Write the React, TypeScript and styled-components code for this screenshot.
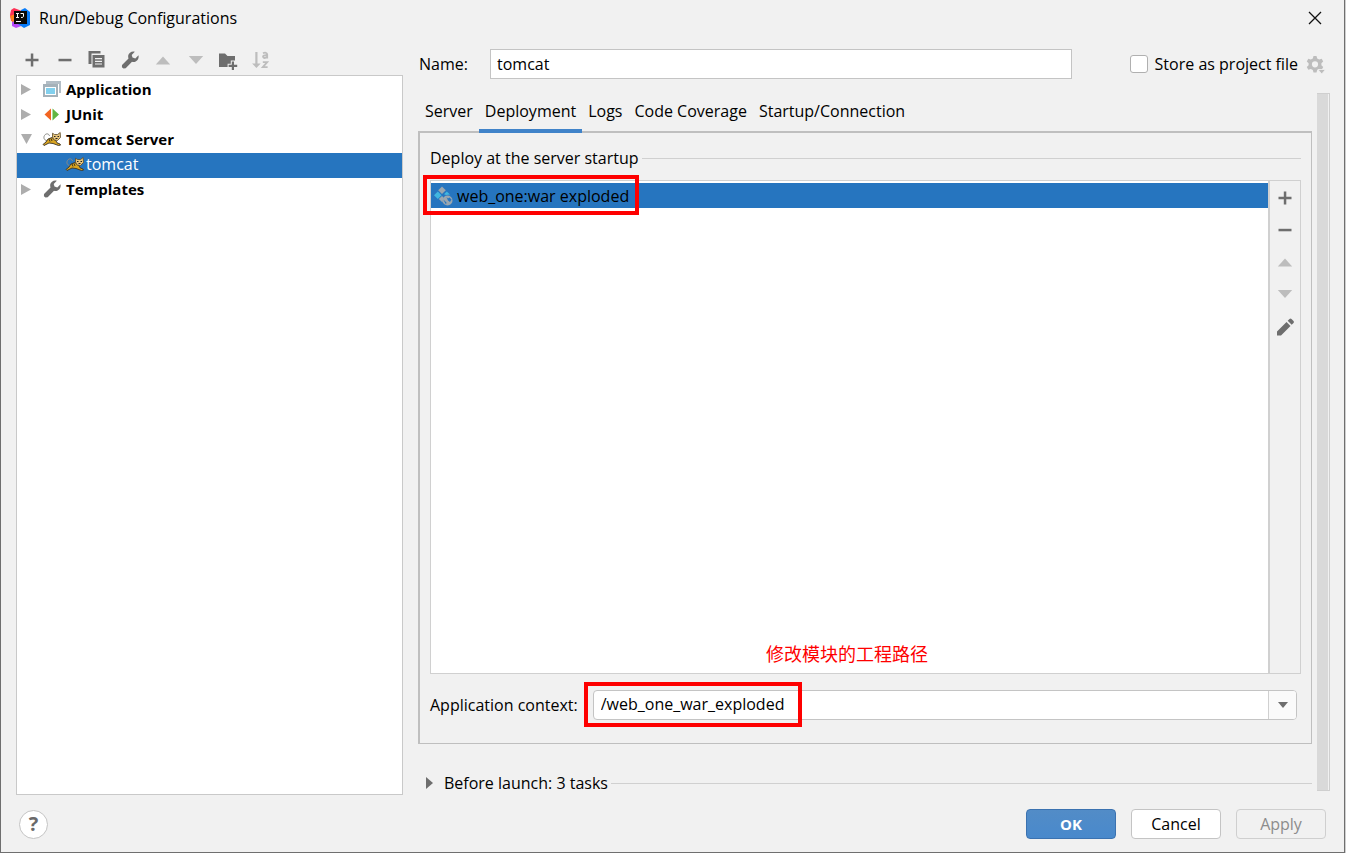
import React, { useState } from "react";
import styled, { createGlobalStyle, css } from "styled-components";

const GlobalStyle = createGlobalStyle`
  *, *::before, *::after { box-sizing: border-box; }
  html, body { margin: 0; padding: 0; background: #cfcfcf; }
  body, button, input {
    font-family: "Open Sans", "Noto Sans", "Noto Sans CJK SC", sans-serif;
    font-size: 16px;
    line-height: 24px;
    color: #000;
  }
  button { cursor: default; }
`;

const Dialog = styled.main`
  display: flex;
  flex-direction: column;
  min-height: 100vh;
  margin-right: 1px;
  background: #f1f1f1;
  border: 1px solid #6f6f6f;
  border-top: 0;
`;

const TitleBar = styled.header`
  display: flex;
  align-items: center;
  height: 36px;
  padding: 0 19px 0 8px;
  gap: 8px;
`;

const Title = styled.h1`
  flex: 1;
  margin: 0;
  font-size: 16px;
  font-weight: 400;
`;

const IconButton = styled.button`
  display: inline-flex;
  align-items: center;
  justify-content: center;
  flex: none;
  width: 20px;
  height: 20px;
  padding: 0;
  border: 0;
  background: none;
  color: #6e6e6e;
  &:disabled { color: #bdbdbd; }
`;

const Body = styled.div`
  display: flex;
  flex: 1;
  gap: 15px;
  padding: 11px 14px 0 15px;
`;

const Sidebar = styled.aside`
  display: flex;
  flex-direction: column;
  width: 387px;
  flex: none;
`;

const Toolbar = styled.div`
  display: flex;
  align-items: center;
  justify-content: space-between;
  width: 255px;
  height: 28px;
  padding: 0 0 3px 6px;
`;

const Tree = styled.ul`
  flex: 1;
  margin: 0;
  padding: 2px 0;
  list-style: none;
  background: #fff;
  border: 1px solid #c9c9c9;
`;

const TreeRow = styled.li<{ $selected?: boolean; $level?: number }>`
  display: flex;
  align-items: center;
  gap: 4px;
  height: 25px;
  padding: 0 0 4px 2px;
  font-size: 15px;
  font-weight: 700;
  ${(p) => p.$level && css`padding-left: 48px; gap: 1px; font-weight: 400; font-size: 16px;`}
  ${(p) => p.$selected && css`background: #2675bf; color: #fff;`}
`;

const Expander = styled.span`
  display: flex;
  width: 19px;
`;

const Main = styled.section`
  display: flex;
  flex-direction: column;
  flex: 1;
  min-width: 0;
`;

const NameRow = styled.div`
  display: flex;
  align-items: center;
  height: 34px;
  padding: 0 4px 0 1px;
`;

const NameLabel = styled.label`
  flex: none;
  width: 71px;
`;

const NameInput = styled.input`
  flex: 1;
  min-width: 0;
  height: 30px;
  padding: 0 6px 1px;
  border: 1px solid #c4c4c4;
  background: #fff;
`;

const StoreLabel = styled.label`
  display: flex;
  align-items: center;
  gap: 7px;
  margin: 0 8px 0 58px;
  white-space: nowrap;
`;

const Checkbox = styled.input`
  appearance: none;
  width: 18px;
  height: 18px;
  margin: 0;
  border: 1px solid #b0b0b0;
  border-radius: 3px;
  background: #fff;
`;

const Scroller = styled.div`
  display: flex;
  flex: 1;
  gap: 5px;
  padding-top: 12px;
`;

const Content = styled.div`
  display: flex;
  flex-direction: column;
  flex: 1;
  min-width: 0;
`;

const ScrollTrack = styled.div`
  width: 13px;
  margin-bottom: 4px;
  background: #d9d9d9;
  border: 1px solid #cfcfcf;
  border-left: 0;
  box-shadow: inset -1px 0 #f1f1f1;
`;

const Tabs = styled.div`
  display: flex;
  height: 40px;
  padding-left: 1px;
  position: relative;
`;

const Tab = styled.button<{ $active?: boolean }>`
  height: 40px;
  padding: 0 6px;
  border: 0;
  border-bottom: 4px solid ${(p) => (p.$active ? "#4083c9" : "transparent")};
  background: none;
  white-space: nowrap;
`;

const Panel = styled.div`
  display: flex;
  flex-direction: column;
  flex: 1;
  margin-top: -2px;
  padding: 13px 10px 23px;
  border: 1px solid #bfbfbf;
  border-top-width: 2px;
  border-left-width: 2px;
`;

const Heading = styled.h2`
  display: flex;
  align-items: center;
  gap: 3px;
  margin: 0;
  font-size: 16px;
  font-weight: 400;
  &::after {
    content: "";
    flex: 1;
    height: 1px;
    background: #d0d0d0;
  }
`;

const Deployments = styled.div`
  position: relative;
  display: flex;
  flex: 1;
  margin-top: 10px;
  border: 1px solid #d0d0d0;
`;

const ArtifactList = styled.ul`
  flex: 1;
  margin: 0;
  padding: 2px 0;
  list-style: none;
  background: #fff;
  border-right: 2px solid #d0d0d0;
`;

const Artifact = styled.li`
  display: flex;
  align-items: center;
  gap: 3px;
  height: 25px;
  padding: 0 3px;
  background: #2675bf;
`;

const SideTools = styled.div`
  display: flex;
  flex-direction: column;
  align-items: center;
  gap: 12px;
  width: 30px;
  padding-top: 7px;
`;

const Highlight = styled.div<{ $kind: "artifact" | "context" }>`
  position: absolute;
  border: 4px solid #fe0000;
  pointer-events: none;
  ${(p) =>
    p.$kind === "artifact"
      ? css`top: -6px; left: -8px; width: 216px; height: 40px;`
      : css`top: -9px; left: -10px; width: 218px; height: 45px;`}
`;

const Note = styled.p`
  position: absolute;
  left: 335px;
  bottom: 8px;
  margin: 0;
  color: #fe0000;
  font-family: "Noto Sans CJK SC", sans-serif;
  font-size: 18px;
  font-weight: 400;
`;

const ContextRow = styled.div`
  display: flex;
  align-items: center;
  gap: 15px;
  margin-top: 16px;
  padding-right: 4px;
`;

const ComboBox = styled.div`
  position: relative;
  display: flex;
  flex: 1;
  height: 30px;
  background: #fff;
  border: 1px solid #c4c4c4;
  border-radius: 4px;
`;

const ComboInput = styled.input`
  flex: 1;
  min-width: 0;
  padding: 0 7px 2px;
  border: 0;
  background: none;
`;

const ComboArrow = styled.button`
  display: flex;
  align-items: center;
  justify-content: center;
  width: 28px;
  padding: 0;
  border: 0;
  border-left: 1px solid #d0d0d0;
  border-radius: 0 3px 3px 0;
  background: #fafafa;
`;

const BeforeLaunch = styled(Heading)`
  padding: 27px 0 0 8px;
  height: 51px;
`;

const Disclosure = styled.button`
  display: flex;
  align-items: center;
  gap: 10px;
  padding: 0;
  border: 0;
  background: none;
`;

const Footer = styled.footer`
  display: flex;
  align-items: center;
  gap: 15px;
  padding: 14px 18px 13px;
`;

const HelpButton = styled.button`
  width: 29px;
  height: 29px;
  margin-right: auto;
  padding: 0;
  border: 1px solid #c4c4c4;
  border-radius: 50%;
  background: #fff;
  color: #6a6a6a;
  font-size: 20px;
  font-weight: 700;
`;

const DialogButton = styled.button<{ $primary?: boolean }>`
  width: 90px;
  height: 30px;
  padding: 0;
  border: 1px solid #c4c4c4;
  border-radius: 4px;
  background: #fff;
  ${(p) => p.$primary && css`
    border-color: #3b72b0;
    background: linear-gradient(#528cc7, #4989cc);
    color: #fff;
    font-size: 15px;
    font-weight: 700;
  `}
  &:disabled { background: #f1f1f1; border-color: #cfcfcf; color: #8c8c8c; }
`;

const Svg = ({ size = 20, children }: { size?: number; children: React.ReactNode }) => (
  <svg width={size} height={size} viewBox="0 0 20 20" fill="currentColor" aria-hidden="true">{children}</svg>
);

const PlusIcon = () => <Svg><path d="M8.800 3.500h2.500v5.300h5.200v2.500h-5.200v5.200H8.800v-5.200H3.500V8.800h5.300z" /></Svg>;
const MinusIcon = () => <Svg><path d="M3.500 8.800h13v2.500h-13z" /></Svg>;
const CopyIcon = () => (
  <Svg><path d="M1.500 1h12v2.500H4.500V14h-3zM5.500 5h12v12.500h-12zM8 8v1.200h7V8zM8 10.700v1.200h7v-1.200zM8 13.400v1.200h7v-1.200z" fillRule="evenodd" /></Svg>
);
const WrenchIcon = () => (
  <Svg><path d="M18.500 5.200 15.300 8.400 12.500 7.600 11.700 5 14.800 1.700C12 .8 8.700 2.600 8.200 5.600 8 6.800 8.200 7.700 8.500 8.500L2 15 1.900 17.300 3.500 18.500 5.700 18.200 12 11.800C16 12.800 19.500 9.400 18.500 5.200Z" /></Svg>
);
const UpIcon = () => <Svg><path d="M10 6.500 17.200 14.500H2.800z" /></Svg>;
const DownIcon = () => <Svg><path d="M2.800 6h14.400L10 14z" /></Svg>;
const FolderIcon = () => (
  <Svg><path d="M1 3.500h6l2.500 2.500h7.500v4.500h-4.200v3.200H9.600V17H1z" /><path d="M13.800 11.500h2.200v3.200h3.200v2.200H16V20h-2.200v-3.100h-3.200v-2.200h3.200z" /></Svg>
);
const SortIcon = () => (
  <Svg>
    <path d="M4.300 2h2.200v11.500h3.200L5.400 18l-4.300-4.500h3.200z" />
    <path d="M12 3.300c2-1.200 4.200-.6 4.200 1.200v4M16.200 5.300c-3-.3-4.700.4-4 1.900s3.200.7 4-.6M11.800 12.200h4.400l-4.400 4.900h4.800" fill="none" stroke="currentColor" strokeWidth="1.800" />
  </Svg>
);
const PencilIcon = () => (
  <Svg><path d="m2 15.500 9.500-9.500 4 4L6 19.500H2zM12.700 4.800 14.500 3q1-1 2 0l2 2q1 1 0 2l-1.800 1.800z" /></Svg>
);
const GearIcon = () => (
  <Svg>
    <path fillRule="evenodd" d="M7.500 2h3l.7 2.500 2 1 2.500-.7 1.500 2.700-1.800 1.800v2l1.800 1.800-1.500 2.700-2.500-.7-2 1-.7 2.500h-3l-.7-2.500-2-1-2.500.7L.8 13.100l1.800-1.800v-2L.8 7.500l1.500-2.700 2.500.7 2-1zM9 7.200a3.100 3.100 0 1 0 0 6.200 3.100 3.100 0 0 0 0-6.200z" />
    <path d="M12 15.500h7.500L15.700 20z" stroke="#f1f1f1" strokeWidth=".8" />
  </Svg>
);
const TreeArrow = ({ open }: { open?: boolean }) => (
  <svg width="14" height="12" viewBox="0 0 14 12" fill="#adadad" aria-hidden="true">
    {open ? <path d="M2 1h11L7.500 11z" /> : <path d="M2 1v11l10-5.500z" />}
  </svg>
);
const AppIcon = () => (
  <Svg><path d="M4 2h15v12h-2V5H4z" fill="#b3bec6" /><path d="M1 5h15v13H1z" fill="#a5b1b9" /><path d="M3 8h11v8H3z" fill="#fff" /><path d="M4 9h9v6H4z" fill="#82d0ee" /></Svg>
);
const JUnitIcon = () => <Svg><path d="M9 4.500v12L2.500 10.500z" fill="#f26522" /><path d="M10.500 4.500v12l6.500-6z" fill="#62b543" /></Svg>;
const CatIcon = () => (
  <svg width="20" height="20" viewBox="0 0 20 20" aria-hidden="true">
    <path d="M6 11.500C2.500 12 1 9 2.500 6.500S7 4.500 7.500 7" fill="none" stroke="#8a8a86" strokeWidth="1" />
    <path d="M10 8.500 6 10 4 13l-3 2.500 1 1L7 14l4 .5 5.500 2 2-.4-.5-1.100-3-1.200-1-2z" fill="#d9a520" stroke="#3b3222" strokeWidth=".9" />
    <path d="M10.500 4.200 12.500 5.500h3l2.700-2L18.500 8.500 15.500 11.500l-3.500-.5-1.500-3z" fill="#e8c57b" stroke="#5b4a28" strokeWidth=".8" />
    <path d="M12 7.500h1.500M15.500 7.500H17M13.500 9.500h2" stroke="#222" strokeWidth="1.200" />
    <path d="m7 10 1 2.500M9 9.500l1 2.500" stroke="#3f341c" />
  </svg>
);
const ArtifactIcon = () => (
  <Svg>
    <path d="m8 .5 3.800 3.800L8 8.100 4.200 4.300z" fill="#9aa7b0" /><path d="m3.800 5.500 3.800 3.800-3.800 3.800L0 9.300z" fill="#40b6e0" />
    <path d="m8 10 1.500 1.500-1 5L4.800 13z" fill="#9aa7b0" /><path d="m12.800 5.500 3.200 3-4 .6-2-.8z" fill="#40b6e0" />
    <circle cx="13.500" cy="14.500" r="5" fill="#9aa7b0" /><path d="m12.500 11 1.500 1.500 1.500-1 2 2-1.500 2.500-2-1.500zM9.300 13.500l3.200 3-.5 2z" fill="#2675bf" />
  </Svg>
);
const LogoIcon = () => (
  <svg width="22" height="22" viewBox="0 0 22 22" aria-hidden="true">
    <path d="M2 3 5 1l8 3-2 9-9 1-1-6z" fill="#fe3155" /><path d="m3 13 6-1 6 6-8 3-4-2z" fill="#b74af7" />
    <path d="m12 3 4-2 5 4v13l-6 3-6-4z" fill="#087cfa" /><path d="m1 9 5-2v7l-3 1z" fill="#fc801d" />
    <path d="M5 4h13v13H5z" fill="#090909" /><path d="M7 6.500h3M8.500 6.500v4M7 10.500h3M11.500 6.500h3v3q0 1-2.500 1M7 14.500h5" fill="none" stroke="#fff" />
  </svg>
);

const tabNames = ["Server", "Deployment", "Logs", "Code Coverage", "Startup/Connection"];

export default function App() {
  const [active, setActive] = useState("Deployment");
  return (
    <>
      <GlobalStyle />
      <Dialog>
        <TitleBar>
          <LogoIcon />
          <Title>Run/Debug Configurations</Title>
          <IconButton aria-label="Close">
            <svg width="14" height="14" viewBox="0 0 14 14" stroke="#111" strokeWidth="1.300" aria-hidden="true"><path d="m1 1 12 12M13 1 1 13" /></svg>
          </IconButton>
        </TitleBar>
        <Body>
          <Sidebar>
            <Toolbar>
              <IconButton aria-label="Add configuration"><PlusIcon /></IconButton>
              <IconButton aria-label="Remove configuration"><MinusIcon /></IconButton>
              <IconButton aria-label="Copy configuration"><CopyIcon /></IconButton>
              <IconButton aria-label="Edit templates"><WrenchIcon /></IconButton>
              <IconButton aria-label="Move up" disabled><UpIcon /></IconButton>
              <IconButton aria-label="Move down" disabled><DownIcon /></IconButton>
              <IconButton aria-label="Create folder"><FolderIcon /></IconButton>
              <IconButton aria-label="Sort" disabled><SortIcon /></IconButton>
            </Toolbar>
            <Tree>
              <TreeRow><Expander><TreeArrow /></Expander><AppIcon />Application</TreeRow>
              <TreeRow><Expander><TreeArrow /></Expander><JUnitIcon />JUnit</TreeRow>
              <TreeRow><Expander><TreeArrow open /></Expander><CatIcon />Tomcat Server</TreeRow>
              <TreeRow $selected $level={1}><CatIcon />tomcat</TreeRow>
              <TreeRow><Expander><TreeArrow /></Expander><IconButton as="span"><WrenchIcon /></IconButton>Templates</TreeRow>
            </Tree>
          </Sidebar>
          <Main>
            <NameRow>
              <NameLabel htmlFor="name">Name:</NameLabel>
              <NameInput id="name" defaultValue="tomcat" />
              <StoreLabel><Checkbox type="checkbox" />Store as project file</StoreLabel>
              <IconButton aria-label="Storage options" disabled><GearIcon /></IconButton>
            </NameRow>
            <Scroller>
              <Content>
                <Tabs role="tablist">
                  {tabNames.map((name) => (
                    <Tab key={name} role="tab" aria-selected={name === active} $active={name === active} onClick={() => setActive(name)}>{name}</Tab>
                  ))}
                </Tabs>
                <Panel>
                  <Heading>Deploy at the server startup</Heading>
                  <Deployments>
                    <ArtifactList>
                      <Artifact><ArtifactIcon />web_one:war exploded</Artifact>
                    </ArtifactList>
                    <SideTools>
                      <IconButton aria-label="Add artifact"><PlusIcon /></IconButton>
                      <IconButton aria-label="Remove artifact"><MinusIcon /></IconButton>
                      <IconButton aria-label="Move artifact up" disabled><UpIcon /></IconButton>
                      <IconButton aria-label="Move artifact down" disabled><DownIcon /></IconButton>
                      <IconButton aria-label="Edit artifact"><PencilIcon /></IconButton>
                    </SideTools>
                    <Highlight $kind="artifact" />
                    <Note>修改模块的工程路径</Note>
                  </Deployments>
                  <ContextRow>
                    <label htmlFor="context">Application context:</label>
                    <ComboBox>
                      <ComboInput id="context" defaultValue="/web_one_war_exploded" />
                      <ComboArrow aria-label="Show contexts">
                        <svg width="12" height="8" viewBox="0 0 12 8" fill="#6e6e6e" aria-hidden="true"><path d="M1 1h10L6 7z" /></svg>
                      </ComboArrow>
                      <Highlight $kind="context" />
                    </ComboBox>
                  </ContextRow>
                </Panel>
                <BeforeLaunch>
                  <Disclosure>
                    <svg width="8" height="12" viewBox="0 0 8 12" fill="#6e6e6e" aria-hidden="true"><path d="M0 0v12l7-6z" /></svg>
                    Before launch: 3 tasks
                  </Disclosure>
                </BeforeLaunch>
              </Content>
              <ScrollTrack />
            </Scroller>
          </Main>
        </Body>
        <Footer>
          <HelpButton aria-label="Help">?</HelpButton>
          <DialogButton $primary>OK</DialogButton>
          <DialogButton>Cancel</DialogButton>
          <DialogButton disabled>Apply</DialogButton>
        </Footer>
      </Dialog>
    </>
  );
}
